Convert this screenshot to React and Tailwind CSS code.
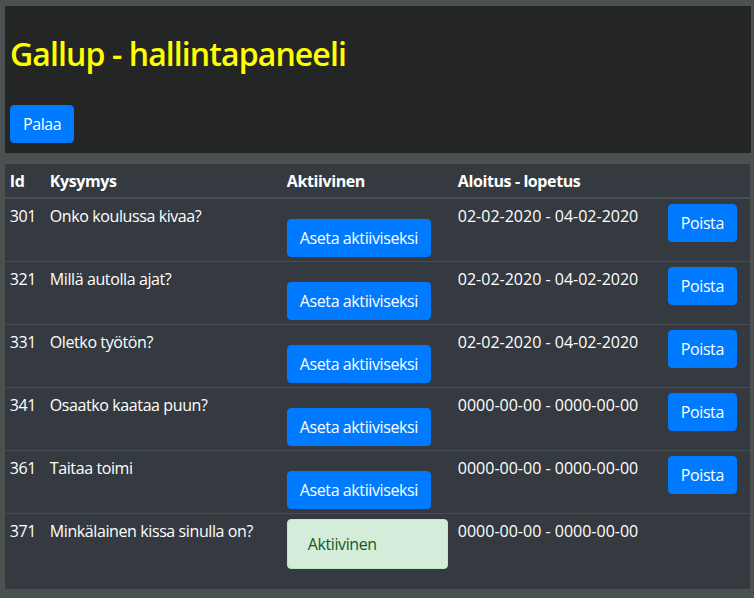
const questions = [
  { id: 301, text: 'Onko koulussa kivaa?', dates: '02-02-2020 - 04-02-2020', active: false },
  { id: 321, text: 'Millä autolla ajat?', dates: '02-02-2020 - 04-02-2020', active: false },
  { id: 331, text: 'Oletko työtön?', dates: '02-02-2020 - 04-02-2020', active: false },
  { id: 341, text: 'Osaatko kaataa puun?', dates: '0000-00-00 - 0000-00-00', active: false },
  { id: 361, text: 'Taitaa toimi', dates: '0000-00-00 - 0000-00-00', active: false },
  { id: 371, text: 'Minkälainen kissa sinulla on?', dates: '0000-00-00 - 0000-00-00', active: true },
]

const btn =
  'block rounded-[4px] border border-[#007bff] bg-[#007bff] px-3 py-[6px] text-base leading-6 text-white'

const App = () => {
  return (
    <div className="min-h-screen bg-[#4b5150] pl-[5px] pt-[6px] font-['Open_Sans',sans-serif] tracking-[-0.4px]">

      {/* Header panel */}
      <div className="w-[746px] bg-[#242626] px-[5px] pt-[29px] pb-[10px]">
        <h2 className="text-[32px] font-semibold leading-[1.2] tracking-[-0.9px] text-[#ffff00]">
          Gallup - hallintapaneeli
        </h2>
        <button className={btn + ' mt-[32px]'}>Palaa</button>
      </div>

      {/* Questions table */}
      <div className="mt-[11px] w-[745px] bg-[#343a40] pb-4">
        <table className="w-full table-fixed border-collapse text-left text-base leading-6 text-white">
          <colgroup>
            <col className="w-[40px]" />
            <col className="w-[237px]" />
            <col className="w-[171px]" />
            <col className="w-[210px]" />
            <col className="w-[87px]" />
          </colgroup>
          <thead>
            <tr className="border-b-2 border-[#454d55]">
              <th className="px-[4.8px] py-[4.5px] font-bold">Id</th>
              <th className="px-[4.8px] py-[4.5px] font-bold">Kysymys</th>
              <th className="px-[4.8px] py-[4.5px] font-bold">Aktiivinen</th>
              <th className="px-[4.8px] py-[4.5px] font-bold">Aloitus - lopetus</th>
              <th className="px-[4.8px] py-[4.5px]"></th>
            </tr>
          </thead>
          <tbody>
            {questions.map((q) => (
              <tr key={q.id} className="border-t border-[#454d55] align-top">
                <td className="px-[4.8px] py-[4.5px]">{q.id}</td>
                <td className="px-[4.8px] py-[4.5px]">{q.text}</td>
                <td className="px-[4.8px] py-[4.5px]">
                  {q.active ? (
                    <div className="rounded-[4px] border border-[#c3e6cb] bg-[#d4edda] px-5 py-3 text-[#155724]">
                      Aktiivinen
                    </div>
                  ) : (
                    <button className={btn + ' mt-[15px]'}>Aseta aktiiviseksi</button>
                  )}
                </td>
                <td className="px-[4.8px] py-[4.5px] tracking-normal">{q.dates}</td>
                <td className="px-[4.8px] py-[4.5px]">
                  {!q.active && <button className={btn}>Poista</button>}
                </td>
              </tr>
            ))}
          </tbody>
        </table>
      </div>

    </div>
  )
}

export default App
